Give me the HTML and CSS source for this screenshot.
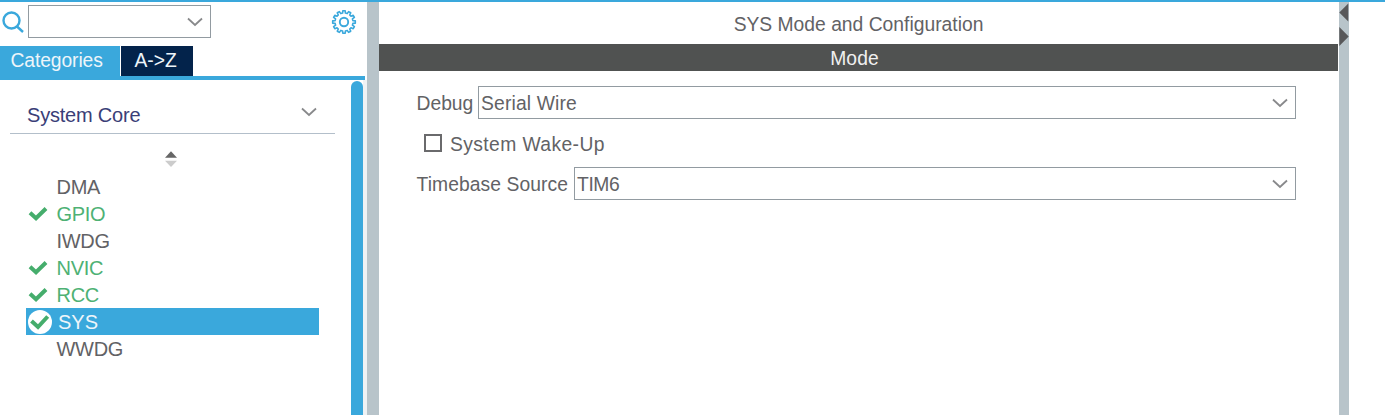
FILE: index.html
```html
<!DOCTYPE html>
<html lang="en">
<head>
<meta charset="utf-8">
<title>SYS Mode and Configuration</title>
<link rel="stylesheet" href="styles.css">
</head>
<body>
<div class="app">
  <aside class="sidebar">
    <div class="search-row">
      <svg class="search-icon" width="24" height="24" viewBox="0 0 24 24"><circle cx="11.5" cy="9.5" r="8" /><path d="M17 15.5L23 21" /></svg>
      <div class="combo search-combo"><svg class="chevron" width="16" height="10" viewBox="0 0 16 10"><path d="M1 1.5L8 8L15 1.5" /></svg></div>
      <svg class="gear" width="26" height="26" viewBox="-13 -13 26 26">
        <path d="M11.3 1.2L8.9 1.4L8.4 3.2L10.4 4.6L9.2 6.7L7 5.7L5.7 7L6.7 9.2L4.6 10.4L3.2 8.4L1.4 8.9L1.2 11.3L-1.2 11.3L-1.4 8.9L-3.2 8.4L-4.6 10.4L-6.7 9.2L-5.7 7L-7 5.7L-9.2 6.7L-10.4 4.6L-8.4 3.2L-8.9 1.4L-11.3 1.2L-11.3 -1.2L-8.9 -1.4L-8.4 -3.2L-10.4 -4.6L-9.2 -6.7L-7 -5.7L-5.7 -7L-6.7 -9.2L-4.6 -10.4L-3.2 -8.4L-1.4 -8.9L-1.2 -11.3L1.2 -11.3L1.4 -8.9L3.2 -8.4L4.6 -10.4L6.7 -9.2L5.7 -7L7 -5.7L9.2 -6.7L10.4 -4.6L8.4 -3.2L8.9 -1.4L11.3 -1.2Z" /><circle r="4.2" />
      </svg>
    </div>
    <div class="tabs"><div class="tab active">Categories</div><div class="tab az">A-&gt;Z</div></div>
    <div class="side-body">
      <div class="group">
        <div class="group-head"><span>System Core</span><svg class="chevron" width="16" height="10" viewBox="0 0 16 10"><path d="M1 1.5L8 8L15 1.5" /></svg></div>
        <svg class="sorter" width="12" height="16" viewBox="0 0 12 16"><path class="up" d="M0 6.7L6 .3L12 6.7Z" /><path class="down" d="M0 9.7H12L6 16Z" /></svg>
        <ul class="tree">
          <li><i></i>DMA</li>
          <li class="ok"><i><svg width="20" height="16" viewBox="0 0 20 16"><path d="M2 6.8L8 12.3L18 2.5" /></svg></i>GPIO</li>
          <li><i></i>IWDG</li>
          <li class="ok"><i><svg width="20" height="16" viewBox="0 0 20 16"><path d="M2 6.8L8 12.3L18 2.5" /></svg></i>NVIC</li>
          <li class="ok"><i><svg width="20" height="16" viewBox="0 0 20 16"><path d="M2 6.8L8 12.3L18 2.5" /></svg></i>RCC</li>
          <li class="selected"><i><svg width="24" height="24" viewBox="0 0 24 24"><circle cx="12" cy="12" r="12" /><path d="M3.5 11L10 17L19.7 6.5" /></svg></i>SYS</li>
          <li><i></i>WWDG</li>
        </ul>
      </div>
      <div class="scroll"><div class="thumb"></div></div>
    </div>
  </aside>
  <div class="divider"></div>
  <main class="main">
    <h1>SYS Mode and Configuration</h1>
    <h2>Mode</h2>
    <div class="form">
      <div class="field"><label class="debug">Debug</label><div class="combo"><span class="wire">Serial Wire</span><svg class="chevron" width="16" height="10" viewBox="0 0 16 10"><path d="M1 1.5L8 8L15 1.5" /></svg></div></div>
      <div class="check"><b></b><span>System Wake-Up</span></div>
      <div class="field"><label class="timebase">Timebase Source</label><div class="combo"><span class="timer">TIM6</span><svg class="chevron" width="16" height="10" viewBox="0 0 16 10"><path d="M1 1.5L8 8L15 1.5" /></svg></div></div>
    </div>
  </main>
  <div class="splitter"><svg width="10" height="48" viewBox="0 0 10 48"><path d="M9.3 1.5V19.5L.3 10.5ZM.3 25L9.7 34.5L.3 44Z" /></svg></div>
</div>
</body>
</html>
```
FILE: styles.css
```css
* { box-sizing: border-box; }
body {
  margin: 0;
  background: #fff;
  color: #626265;
  font: 20px/27px "Liberation Sans", Arial, sans-serif;
}
.app {
  display: flex;
  height: 415px;
  overflow: hidden;
  border-top: 2px solid #3aa8dc;
}
.sidebar { width: 367px; display: flex; flex-direction: column; }
.search-row { display: flex; height: 44px; align-items: flex-start; }
.search-icon { margin: 9px 4px 0 0; fill: none; stroke: #3aa8dc; stroke-width: 2.4; }
.combo {
  display: flex;
  flex: 1;
  align-items: center;
  height: 33px;
  padding: 0 7px 0 2px;
  border: 1px solid #929ba1;
}
.combo span { padding-top: 2px; }
.search-combo { flex: none; width: 183px; margin-top: 3px; }
.chevron { margin-left: auto; fill: none; stroke: #88898b; stroke-width: 1.8; }
.gear { margin: 7px 0 0 120px; fill: none; stroke: #3aa8dc; stroke-width: 1.6; stroke-linejoin: round; }
.gear circle { stroke-width: 1.9; }
.tabs { display: flex; gap: 1px; height: 34px; border-bottom: 4px solid #3aa8dc; margin-right: 2px; }
.tab { height: 30px; padding: 1px 0 0 10.5px; color: #edf5fa; letter-spacing: -.1px; font-size: 19.3px; }
.tab.active { width: 120px; background: #3aa8dc; }
.tab.az { width: 72px; padding-left: 13.5px; background: #03234b; letter-spacing: 0; }
.side-body { display: flex; flex: 1; }
.group { width: 351px; padding: 14px 16px 0 10px; }
.group-head {
  display: flex;
  height: 40px;
  padding: 8px 18px 0 17px;
  border-bottom: 1px solid #b3bfca;
  color: #3a3e77;
  letter-spacing: -.2px;
}
.group-head .chevron { margin-top: 5px; }
.sorter { display: block; margin: 17px 0 6px 155px; }
.up { fill: #666; }
.down { fill: #ccc; }
.tree { list-style: none; margin: 0 0 0 16px; padding: 0; width: 293px; }
.tree li { display: flex; height: 27px; line-height: 28px; letter-spacing: -.3px; }
.tree i { display: flex; align-items: center; width: 30.5px; padding-left: 2px; }
.tree svg { fill: none; stroke: #45ad6c; stroke-width: 4; }
.tree circle { fill: #fff; stroke: none; }
.ok { color: #4eb174; }
.tree .selected { background: #3aa8dc; color: #edf5fa; letter-spacing: 0; }
.selected i { width: 32px; }
.scroll { width: 16px; background: linear-gradient(to right, #fff 12px, #eff2f4 12px); }
.thumb { width: 12px; height: 100%; margin-top: 1px; border-radius: 6px 6px 0 0; background: #3aa8dc; }
.divider { width: 12px; background: #b8c4ca; }
.main { width: 959px; }
h1, h2 { margin: 0; font-weight: 400; text-align: center; font-size: 19.3px; }
h1 { height: 42px; padding-top: 9px; }
h2 { height: 27px; padding: 1px 8px 0 0; background: #505251; color: #f0f0f0; letter-spacing: .1px; }
.form { padding: 15px 42px 0 37px; font-size: 19.3px; }
.field { display: flex; align-items: center; height: 33px; }
.field label { padding: 2px 0 0 .5px; }
.debug { width: 62px; }
.timebase { width: 158px; letter-spacing: .08px; }
.wire { letter-spacing: .15px; }
.timer { letter-spacing: -.4px; }
.check { display: flex; align-items: center; height: 48px; padding-left: 8px; letter-spacing: .4px; }
.check span { padding-top: 2px; }
.check b { width: 18px; height: 18px; margin-right: 8px; border: 2px solid #6a6a6c; }
.splitter { width: 10px; margin-left: 1px; background: #b8c4ca; }
.splitter svg { display: block; fill: #58585a; }
```
